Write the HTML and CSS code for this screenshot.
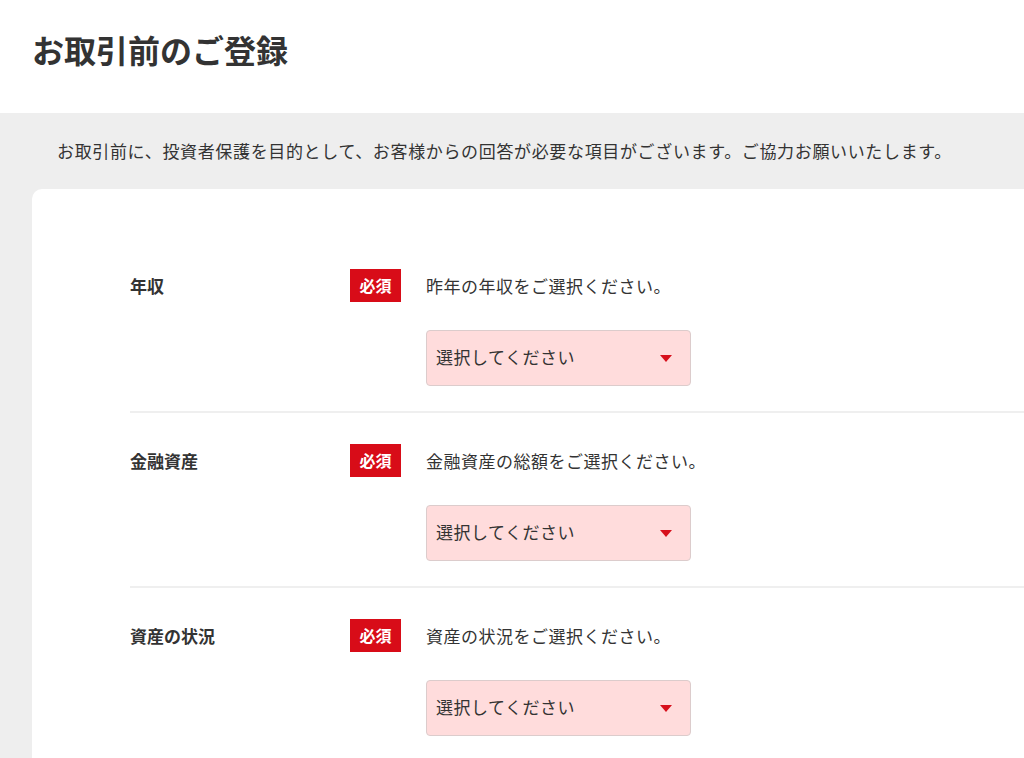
FILE: index.html
```html
<!DOCTYPE html>
<html lang="ja">
<head>
  <meta charset="UTF-8">
  <meta name="viewport" content="width=device-width, initial-scale=1.0">
  <title>お取引前のご登録</title>
  <link rel="stylesheet" href="styles.css">
</head>
<body>

  <header class="cabecalho">
    <h1>お取引前のご登録</h1>
  </header>

  <main class="conteudo">
    <p class="descricao">お取引前に、投資者保護を目的として、お客様からの回答が必要な項目がございます。ご協力お願いいたします。</p>

    <div class="cartao">

      <div class="linha">
        <div class="rotulo">年収</div>
        <span class="obrigatorio">必須</span>
        <div class="campo">
          <p class="instrucao">昨年の年収をご選択ください。</p>
          <div class="seletor">
            <span>選択してください</span>
            <svg class="seta" width="12" height="7" viewBox="0 0 12 7"><polygon points="0,0 12,0 6,7" fill="#d7101c"/></svg>
          </div>
        </div>
      </div>

      <div class="linha">
        <div class="rotulo">金融資産</div>
        <span class="obrigatorio">必須</span>
        <div class="campo">
          <p class="instrucao">金融資産の総額をご選択ください。</p>
          <div class="seletor">
            <span>選択してください</span>
            <svg class="seta" width="12" height="7" viewBox="0 0 12 7"><polygon points="0,0 12,0 6,7" fill="#d7101c"/></svg>
          </div>
        </div>
      </div>

      <div class="linha">
        <div class="rotulo">資産の状況</div>
        <span class="obrigatorio">必須</span>
        <div class="campo">
          <p class="instrucao">資産の状況をご選択ください。</p>
          <div class="seletor">
            <span>選択してください</span>
            <svg class="seta" width="12" height="7" viewBox="0 0 12 7"><polygon points="0,0 12,0 6,7" fill="#d7101c"/></svg>
          </div>
        </div>
      </div>

    </div>
  </main>

</body>
</html>
```

FILE: styles.css
```css
body {
  margin: 0;
  padding: 0;
  background-color: #eeeeee;
  color: #333;
  font-family: "Noto Sans CJK JP", "Noto Sans", sans-serif;
  overflow: hidden;
}

.cabecalho {
  background-color: #fff;
  height: 113px;
  padding: 27px 32px 0;
  box-sizing: border-box;
}

h1 {
  margin: 0;
  font-size: 32px;
  line-height: 44px;
  font-weight: bold;
  color: #333;
}

.conteudo {
  padding: 24px 0 0 32px;
}

.descricao {
  margin: 0 0 24px 25px;
  font-size: 17px;
  line-height: 28px;
  letter-spacing: 0.65px;
}

.cartao {
  background-color: #fff;
  border-radius: 10px 0 0 0;
  padding: 49px 0 0 98px;
  min-height: 600px;
}

.linha {
  display: flex;
  align-items: flex-start;
  padding: 31px 0 25px;
  border-bottom: 2px solid #efefef;
}

.rotulo {
  width: 220px;
  font-size: 17px;
  font-weight: bold;
  line-height: 33px;
}

.obrigatorio {
  width: 51px;
  height: 33px;
  background-color: #d80c18;
  color: #fff;
  font-size: 16px;
  font-weight: bold;
  line-height: 33px;
  text-align: center;
}

.campo {
  margin-left: 25px;
}

.instrucao {
  margin: 0 0 28px;
  font-size: 17px;
  line-height: 33px;
  height: 33px;
  letter-spacing: 0.5px;
}

.seletor {
  width: 265px;
  height: 56px;
  box-sizing: border-box;
  background-color: #ffdcdc;
  border: 1px solid #dccccc;
  border-radius: 4px;
  padding: 0 18px 4px 9px;
  display: flex;
  align-items: center;
  justify-content: space-between;
  font-size: 17px;
  letter-spacing: 0.5px;
}

.seta {
  display: block;
  margin-top: 4px;
}
```
